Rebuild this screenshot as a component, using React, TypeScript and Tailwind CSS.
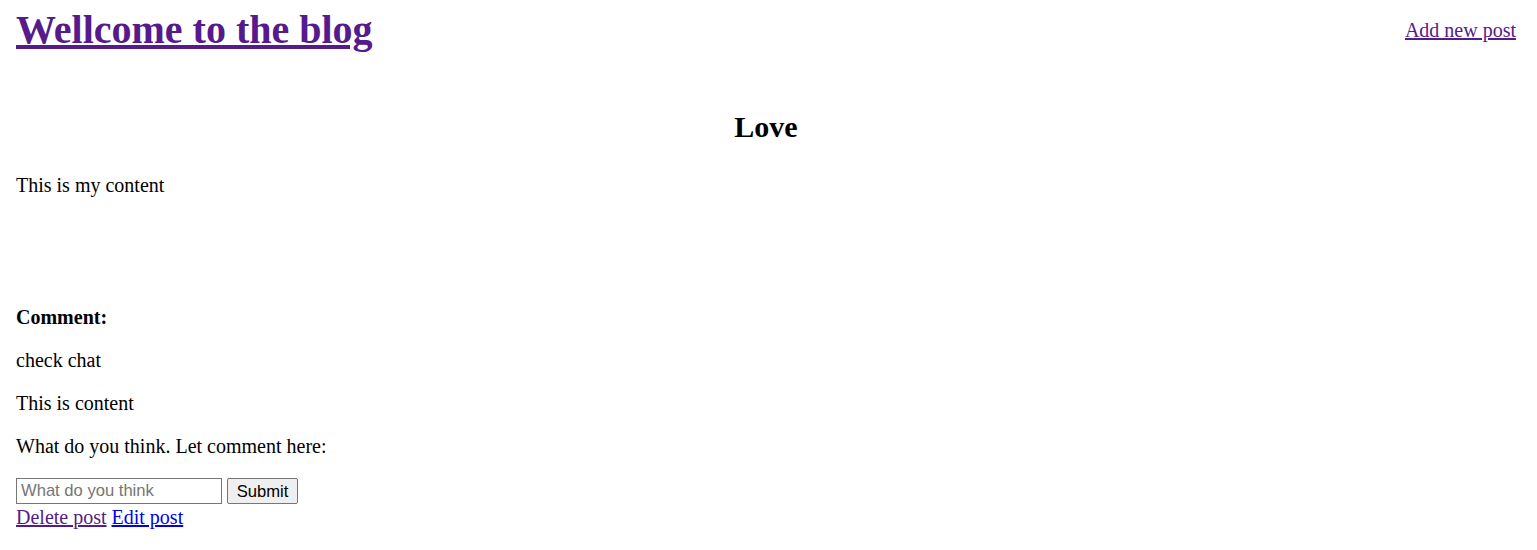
const serif = "font-['Liberation_Serif','Times_New_Roman',serif]"

const App = () => {
  return (
    <div className={`${serif} min-h-[550px] bg-white pl-4 pr-[21px] pt-[7px] text-[20px] leading-[23px] text-black`}>
      <div className="flex flex-row items-center justify-between">
        <h1 className="m-0 text-[40px] leading-[46px] font-bold">
          <a href="#" className="text-[#551a8b] underline">
            Wellcome to the blog
          </a>
        </h1>
        <a href="#" className="text-[#551a8b] underline">
          Add new post
        </a>
      </div>

      <h2 className="mt-[56px] text-center text-[30px] leading-[35px] font-bold">Love</h2>
      <p className="mt-[30px]">This is my content</p>

      <div className="mt-[109px]">
        <p className="font-bold">Comment:</p>
        <p className="mt-[20px]">check chat</p>
        <p className="mt-[20px]">This is content</p>
      </div>

      <p className="mt-[20px]">What do you think. Let comment here:</p>
      <form className="mt-[20px] flex flex-row items-center gap-[5px]" onSubmit={(e) => e.preventDefault()}>
        <input
          type="text"
          placeholder="What do you think"
          className="h-[26px] w-[206px] border border-[#767676] px-[4px] font-['Liberation_Sans',Arial,sans-serif] text-[16.6px] placeholder:text-[#757575]"
        />
        <button
          type="submit"
          className="h-[26px] w-[71px] rounded-[2px] border border-[#767676] bg-[#efefef] font-['Liberation_Sans',Arial,sans-serif] text-[16.6px] text-black"
        >
          Submit
        </button>
      </form>
      <div className="mt-[2px]">
        <a href="#" className="text-[#551a8b] underline">
          Delete post
        </a>{" "}
        <a href="#" className="text-[#0000ee] underline">
          Edit post
        </a>
      </div>
    </div>
  )
}

export default App
